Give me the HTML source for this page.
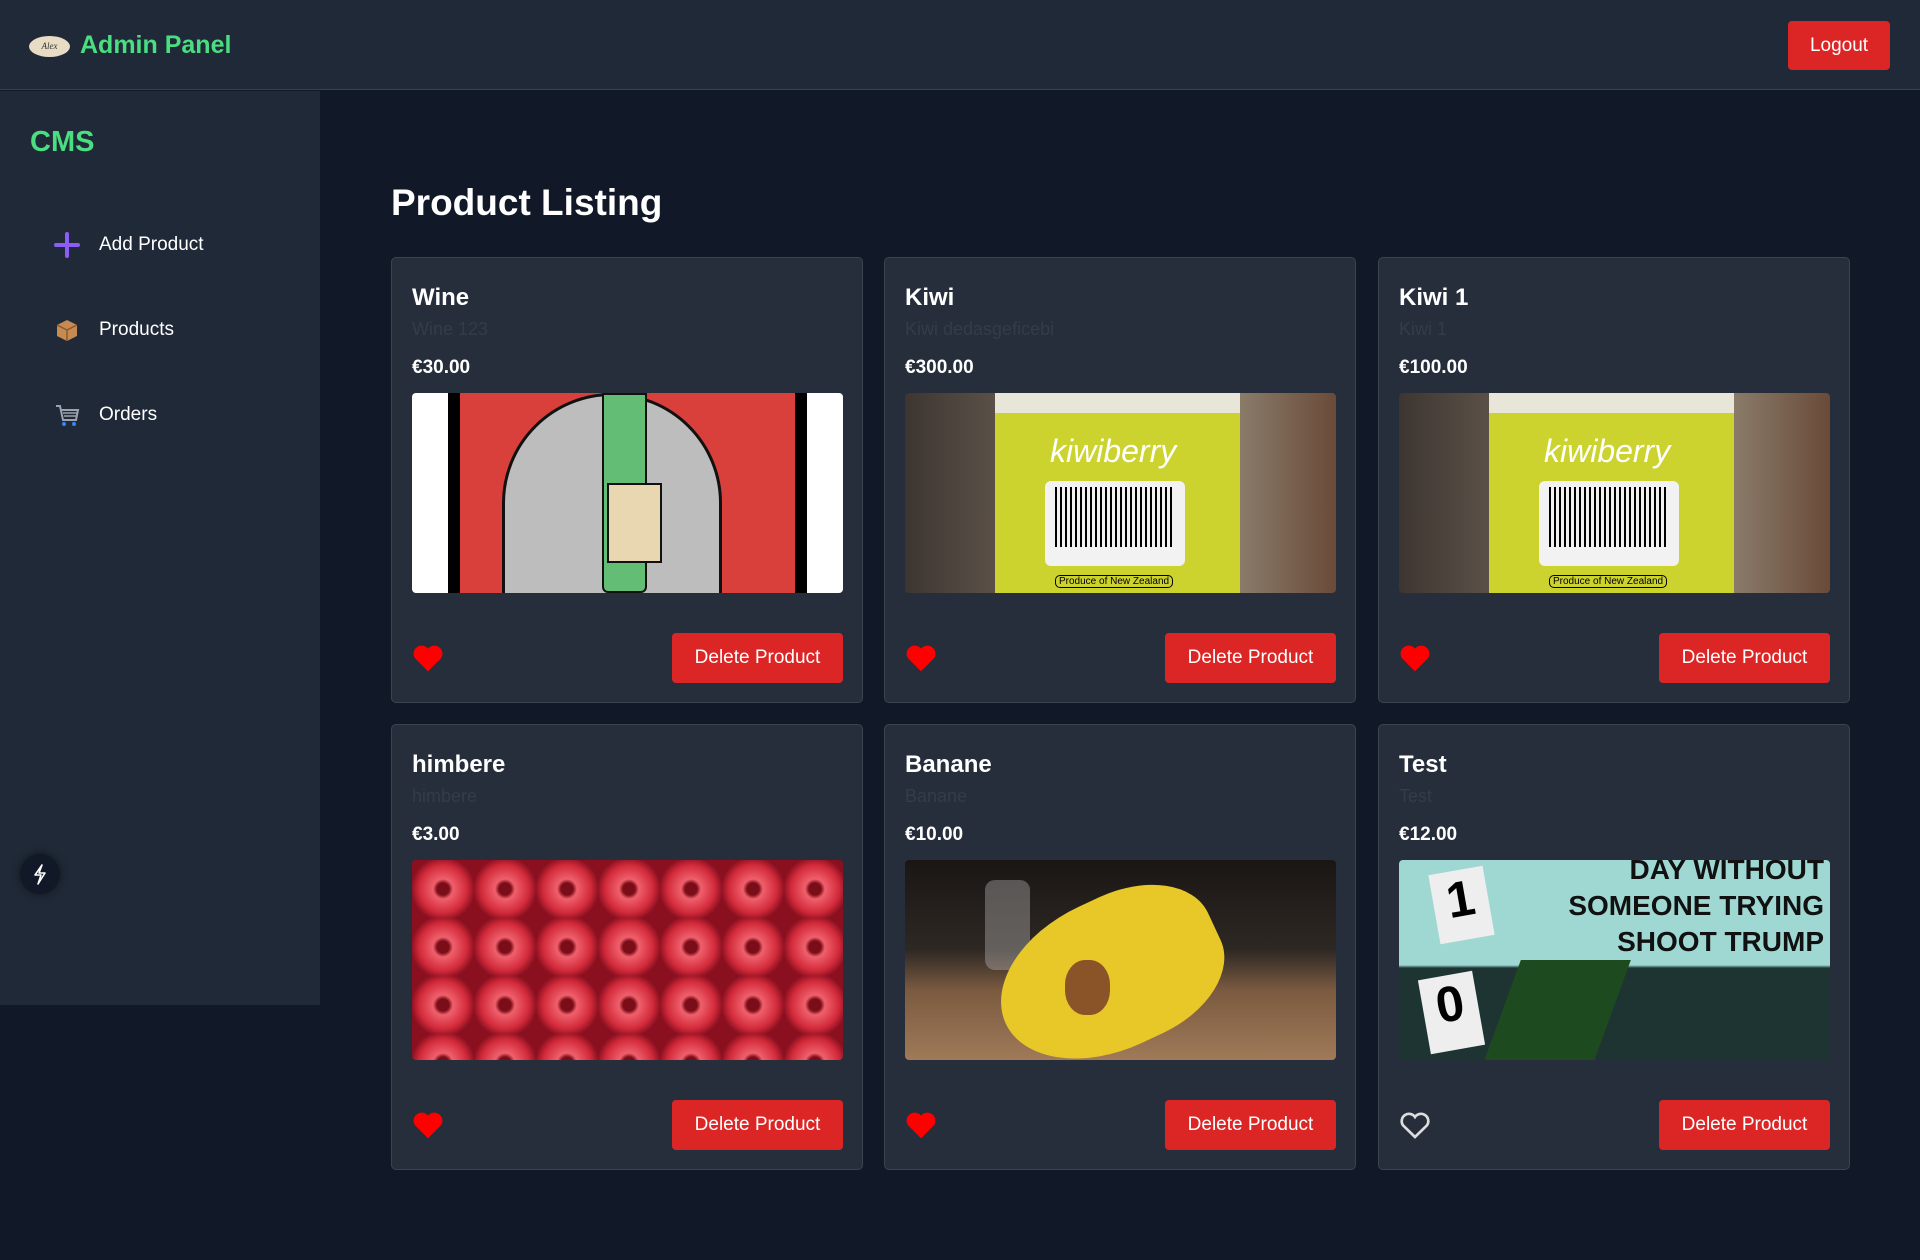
<!DOCTYPE html>
<html><head><meta charset="utf-8">
<style>
*{box-sizing:border-box;margin:0;padding:0}
body{width:1920px;height:1260px;background:#111827;font-family:"Liberation Sans",sans-serif;color:#fff;position:relative;overflow:hidden}
.hdr{position:absolute;left:0;top:0;width:1920px;height:90px;background:#1f2937;border-bottom:1px solid #374151}
.logo{position:absolute;left:29px;top:36px;width:41px;height:21px;border-radius:50%;background:#e8dcc4;color:#333;font:italic 9px "Liberation Serif",serif;text-align:center;line-height:21px}
.brand{position:absolute;left:80px;top:31px;font-size:25px;font-weight:bold;color:#4ade80}
.logout{position:absolute;left:1788px;top:21px;width:102px;height:49px;background:#dc2626;border-radius:4px;font-size:19px;text-align:center;line-height:49px}
.side{position:absolute;left:0;top:91px;width:320px;height:914px;background:#1f2937}
.cms{position:absolute;left:30px;top:126px;font-size:29px;font-weight:bold;color:#4ade80}
.nav{position:absolute;left:54px;font-size:19px;display:flex;align-items:center}
.nav span.i{width:26px;height:26px;margin-right:19px;display:inline-block;position:relative}
.bolt{position:absolute;left:20px;top:763px;width:40px;height:40px;border-radius:50%;background:#111827;box-shadow:0 0 8px rgba(0,0,0,.5)}
h1{position:absolute;left:391px;top:182px;font-size:37px;font-weight:bold}
.card{position:absolute;width:472px;height:446px;background:#262d3b;border:1px solid #3b4352;border-radius:5px}
.card .t{position:absolute;left:20px;top:26px;font-size:24px;font-weight:bold}
.card .s{position:absolute;left:20px;top:61px;font-size:18px;color:#343c4a}
.card .p{position:absolute;left:20px;top:99px;font-size:19px;font-weight:bold}
.card .im{position:absolute;left:20px;top:135px;width:431px;height:200px;border-radius:4px;overflow:hidden}
.card .h{position:absolute;left:20px;top:385px;width:32px;height:30px}
.card .b{position:absolute;left:280px;top:375px;width:171px;height:50px;background:#dc2626;border-radius:4px;font-size:19px;text-align:center;line-height:50px}
</style></head><body>
<div class="hdr"><div class="logo">Alex</div><div class="brand">Admin Panel</div><div class="logout">Logout</div></div>
<div class="side">
<div class="cms" style="top:35px">CMS</div>
<div class="nav" style="top:141px"><span class="i"><svg width="26" height="26"><path d="M13 2v22M2 13h22" stroke="#8b5cf6" stroke-width="4" stroke-linecap="round"/></svg></span>Add Product</div>
<div class="nav" style="top:226px"><span class="i"><svg width="26" height="26"><path d="M3 8l10-5 10 5v11l-10 5-10-5z" fill="#c68a52"/><path d="M3 8l10 5 10-5M13 13v11" stroke="#8a5a2e" stroke-width="1.5" fill="none"/></svg></span>Products</div>
<div class="nav" style="top:311px"><span class="i"><svg width="26" height="26"><path d="M2 4h4l3 14h13l2-10H7" stroke="#9ca3af" stroke-width="2" fill="none"/><path d="M9 11h14M10 14h12" stroke="#9ca3af" stroke-width="1.5"/><circle cx="10" cy="22" r="2" fill="#3b82f6"/><circle cx="20" cy="22" r="2" fill="#3b82f6"/></svg></span>Orders</div>
<div class="bolt"><svg width="40" height="40"><path d="M22 11l-7 10h6l-3 9 7-11h-6z" stroke="#fff" stroke-width="1.6" fill="none" stroke-linejoin="round"/></svg></div>
</div>
<h1>Product Listing</h1>

<div class="card" style="left:391px;top:257px"><div class="t">Wine</div><div class="s">Wine 123</div><div class="p">€30.00</div>
<div class="im" style="background:linear-gradient(90deg,#fff 0 36px,#000 36px 48px,#d9403b 48px 383px,#000 383px 395px,#fff 395px)"><div style="position:absolute;left:90px;top:0;width:220px;height:220px;border-radius:50% 50% 0 0;background:#bdbdbd;border:3px solid #111"></div><div style="position:absolute;left:190px;top:0;width:45px;height:200px;background:#63bd74;border:2px solid #111;border-radius:0 0 6px 6px"></div><div style="position:absolute;left:195px;top:90px;width:55px;height:80px;background:#e8d7b0;border:2px solid #111"></div></div>
<svg class="h" viewBox="0 0 24 22"><path d="M12 21L2.5 11.5A5.5 5.5 0 0 1 12 4a5.5 5.5 0 0 1 9.5 7.5z" fill="#f00"/></svg><div class="b">Delete Product</div></div>

<div class="card" style="left:884px;top:257px"><div class="t">Kiwi</div><div class="s">Kiwi dedasgeficebi</div><div class="p">€300.00</div>
<div class="im" style="background:linear-gradient(90deg,#3d3630 0,#5a5048 90px,#ccd32e 90px 335px,#8a7b6a 335px,#6a4a38)"><div style="position:absolute;left:90px;top:0;width:245px;height:20px;background:#e8e6d8"></div><div style="position:absolute;left:145px;top:40px;font:italic 32px 'Liberation Sans';color:#fff">kiwiberry</div><div style="position:absolute;left:140px;top:88px;width:140px;height:85px;background:#f2f2f2;border-radius:6px;background-image:repeating-linear-gradient(90deg,#000 0 2px,transparent 2px 5px);background-size:120px 60px;background-position:10px 6px;background-repeat:no-repeat"></div><div style="position:absolute;left:150px;top:182px;font-size:10px;color:#000;border:1px solid #000;border-radius:5px;padding:0 3px">Produce of New Zealand</div></div>
<svg class="h" viewBox="0 0 24 22"><path d="M12 21L2.5 11.5A5.5 5.5 0 0 1 12 4a5.5 5.5 0 0 1 9.5 7.5z" fill="#f00"/></svg><div class="b">Delete Product</div></div>

<div class="card" style="left:1378px;top:257px"><div class="t">Kiwi 1</div><div class="s">Kiwi 1</div><div class="p">€100.00</div>
<div class="im" style="background:linear-gradient(90deg,#3d3630 0,#5a5048 90px,#ccd32e 90px 335px,#8a7b6a 335px,#6a4a38)"><div style="position:absolute;left:90px;top:0;width:245px;height:20px;background:#e8e6d8"></div><div style="position:absolute;left:145px;top:40px;font:italic 32px 'Liberation Sans';color:#fff">kiwiberry</div><div style="position:absolute;left:140px;top:88px;width:140px;height:85px;background:#f2f2f2;border-radius:6px;background-image:repeating-linear-gradient(90deg,#000 0 2px,transparent 2px 5px);background-size:120px 60px;background-position:10px 6px;background-repeat:no-repeat"></div><div style="position:absolute;left:150px;top:182px;font-size:10px;color:#000;border:1px solid #000;border-radius:5px;padding:0 3px">Produce of New Zealand</div></div>
<svg class="h" viewBox="0 0 24 22"><path d="M12 21L2.5 11.5A5.5 5.5 0 0 1 12 4a5.5 5.5 0 0 1 9.5 7.5z" fill="#f00"/></svg><div class="b">Delete Product</div></div>

<div class="card" style="left:391px;top:724px"><div class="t">himbere</div><div class="s">himbere</div><div class="p">€3.00</div>
<div class="im" style="background-color:#c8202e;background-image:radial-gradient(circle at 50% 50%,#7a0d18 0 6px,#f0606c 10px,#d22a3a 24px,#8a1020 32px);background-size:62px 58px"></div>
<svg class="h" viewBox="0 0 24 22"><path d="M12 21L2.5 11.5A5.5 5.5 0 0 1 12 4a5.5 5.5 0 0 1 9.5 7.5z" fill="#f00"/></svg><div class="b">Delete Product</div></div>

<div class="card" style="left:884px;top:724px"><div class="t">Banane</div><div class="s">Banane</div><div class="p">€10.00</div>
<div class="im" style="background:linear-gradient(180deg,#1a1614 0,#2e2824 90px,#7a5a40 130px,#a07a58)"><div style="position:absolute;left:80px;top:20px;width:45px;height:90px;background:rgba(200,200,200,.35);border-radius:10px"></div><div style="position:absolute;left:90px;top:40px;width:230px;height:150px;border-radius:50% 40% 40% 50%;background:#e8c828;transform:rotate(-25deg)"></div><div style="position:absolute;left:160px;top:100px;width:45px;height:55px;border-radius:45%;background:#8a5428"></div></div>
<svg class="h" viewBox="0 0 24 22"><path d="M12 21L2.5 11.5A5.5 5.5 0 0 1 12 4a5.5 5.5 0 0 1 9.5 7.5z" fill="#f00"/></svg><div class="b">Delete Product</div></div>

<div class="card" style="left:1378px;top:724px"><div class="t">Test</div><div class="s">Test</div><div class="p">€12.00</div>
<div class="im" style="background:linear-gradient(180deg,#9fd8d2 0 105px,#1e3432 108px)"><div style="position:absolute;left:120px;top:-8px;font:bold 28px 'Liberation Sans';color:#111;line-height:36px;text-align:right;width:305px">DAY WITHOUT<br>SOMEONE TRYING<br>SHOOT TRUMP</div><div style="position:absolute;left:35px;top:10px;width:55px;height:70px;background:#eee;transform:rotate(-10deg);font:bold 50px 'Liberation Sans';color:#000;text-align:center">1</div><div style="position:absolute;left:25px;top:115px;width:55px;height:75px;background:#eee;transform:rotate(-10deg);font:bold 50px 'Liberation Sans';color:#000;text-align:center">0</div><div style="position:absolute;left:100px;top:100px;width:110px;height:120px;background:#1e4a20;transform:skewX(-20deg)"></div></div>
<svg class="h" viewBox="0 0 24 22"><path d="M12 20L3 11.2A5 5 0 0 1 12 5a5 5 0 0 1 9 6.2z" fill="none" stroke="#ddd" stroke-width="2"/></svg><div class="b">Delete Product</div></div>
</body></html>
